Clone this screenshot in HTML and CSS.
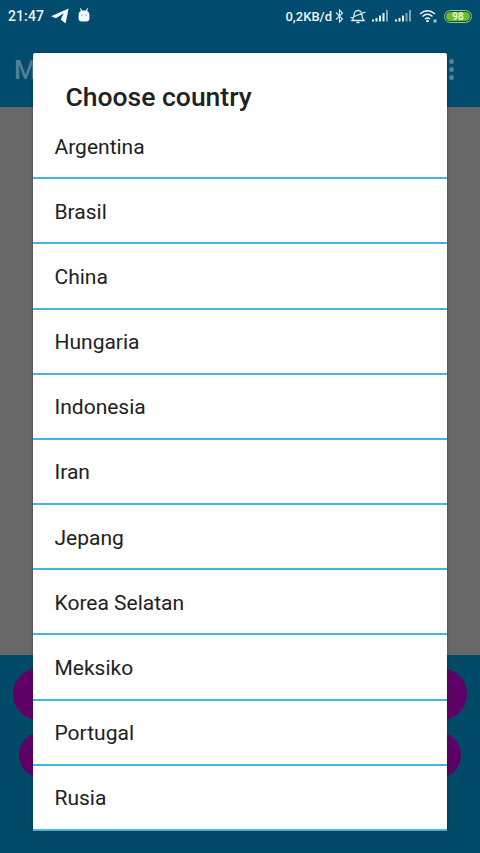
FILE: index.html
```html
<!DOCTYPE html>
<html lang="en">
<head>
<meta charset="utf-8">
<title>Choose country</title>
<link rel="stylesheet" href="styles.css">
</head>
<body>
<div class="app">
  <header class="top">
    <div class="status">
      <div class="status-left">
        <span class="time">21:47</span>
        <svg class="ic-tg" viewBox="0 0 18 16"><path d="M0 8.2 17.6.4 14.6 15.4 9.6 11.6 12.8 5.2 5 10.2Z" fill="#f1f7fa"/></svg>
        <svg class="ic-bot" viewBox="0 0 13 15"><path d="M3 0 4.4 2.6H8.600L10 0 10.800.6 10 3.200Q12.400 4.400 12.400 7.500V11Q12.400 14.500 9 14.500H4Q.6 14.500.6 11V7.500Q.6 4.400 3 3.200L2.200.6Z" fill="#f1f7fa"/><circle cx="4.300" cy="7.500" r=".9" fill="#8fb0c0"/><circle cx="8.700" cy="7.500" r=".9" fill="#8fb0c0"/></svg>
      </div>
      <div class="status-right">
        <span class="speed">0,2KB/d</span>
        <svg class="ic-bt" viewBox="0 0 9 14"><path d="M1 3.500 7.500 10 4.500 13V1L7.500 4 1 10.500" fill="none" stroke="#dfeaf0" stroke-width="1.100"/></svg>
        <svg class="ic-mute" viewBox="0 0 16 15"><path d="M8 1.500C5 1.500 4 4 4 6.500S3.500 10 2 11.500H14C12.500 10 12 9 12 6.500S11 1.500 8 1.500ZM6.500 13.500H9.500M.5 9 15.500 3" fill="none" stroke="#dfeaf0" stroke-width="1.300"/></svg>
        <svg class="ic-sig" viewBox="0 0 17 12"><g fill="#f1f7fa"><rect x="0" y="9.500" width="2" height="2"/><rect x="3.500" y="8" width="2" height="3.500"/><rect x="7" y="5.500" width="2" height="6"/><rect x="10.500" y="3" width="2" height="8.500"/></g><rect x="14" y="0" width="2" height="11.500" fill="#7fa3b7"/></svg>
        <svg class="ic-sig" viewBox="0 0 17 12"><g fill="#f1f7fa"><rect x="0" y="9.500" width="2" height="2"/><rect x="3.500" y="8" width="2" height="3.500"/><rect x="7" y="5.500" width="2" height="6"/></g><g fill="#7fa3b7"><rect x="10.500" y="3" width="2" height="8.500"/><rect x="14" y="0" width="2" height="11.500"/></g></svg>
        <svg class="ic-wifi" viewBox="0 0 18 14"><path d="M1 5Q8.500-1.500 16 5M3.500 7.500Q8.500 3 13.500 7.500M6 10Q8.500 8 11 10" fill="none" stroke="#f1f7fa" stroke-width="1.500"/><circle cx="8.500" cy="12" r="1.300" fill="#f1f7fa"/><rect x="14.500" y="10.500" width="3" height="3" fill="#a9c3d0"/></svg>
        <span class="battery"><span class="battery-level">98</span></span>
      </div>
    </div>
    <div class="appbar">
      <span class="app-title">M</span>
      <span class="menu"><i></i><i></i><i></i></span>
    </div>
  </header>
  <main class="content"></main>
  <footer class="bottom">
    <div class="pair pair-a"><span class="fab"></span><span class="fab"></span></div>
    <div class="pair pair-b"><span class="fab"></span><span class="fab"></span></div>
  </footer>
  <section class="dialog">
    <h1 class="dialog-title">Choose country</h1>
    <ul class="list">
      <li>Argentina</li>
      <li>Brasil</li>
      <li>China</li>
      <li>Hungaria</li>
      <li>Indonesia</li>
      <li>Iran</li>
      <li>Jepang</li>
      <li>Korea Selatan</li>
      <li>Meksiko</li>
      <li>Portugal</li>
      <li>Rusia</li>
    </ul>
  </section>
</div>
</body>
</html>
```
FILE: styles.css
```css
* { box-sizing: border-box; }
html, body { margin: 0; padding: 0; }
body { width: 480px; height: 853px; overflow: hidden; font-family: Roboto, "Liberation Sans", sans-serif; }
.app { position: relative; width: 480px; height: 853px; display: flex; flex-direction: column; background: #004a68; }
.top { height: 107px; background: #004b6e; flex: none; }
.status { height: 32px; display: flex; justify-content: space-between; align-items: center; padding: 0 8px; color: #eef5f8; }
.status-left, .status-right { display: flex; align-items: center; }
.time { font-size: 14px; font-weight: 500; letter-spacing: .1px; }
.ic-tg { width: 18px; height: 16px; margin-left: 7px; }
.ic-bot { width: 12px; height: 14px; margin-left: 9px; margin-top: -3px; }
.speed { font-size: 13px; font-weight: 500; }
.ic-bt { width: 9px; height: 14px; margin-left: 3px; }
.ic-mute { width: 16px; height: 15px; margin-left: 6px; }
.ic-sig { width: 17px; height: 12px; margin-left: 6px; }
.ic-sig + .ic-sig { margin-left: 6px; }
.ic-wifi { width: 18px; height: 14px; margin-left: 7px; }
.battery { width: 28px; height: 13px; margin-left: 7px; border: 1px solid #8fd16a; border-radius: 7px; padding: 1px; display: flex; }
.battery-level { flex: 1; background: #75b82e; border-radius: 5px; color: #e8f5c8; font-size: 10px; font-weight: 700; line-height: 9px; text-align: center; }
.appbar { height: 75px; display: flex; justify-content: space-between; align-items: center; padding: 0 26px 0 14px; }
.app-title { font-size: 26px; font-weight: 500; color: #557f96; }
.menu { display: flex; flex-direction: column; gap: 3px; }
.menu i { width: 5px; height: 5px; border-radius: 50%; background: #557f96; }
.content { flex: 1; background: #686868; }
.bottom { height: 198px; flex: none; background: #004a68; padding-top: 13px; display: flex; flex-direction: column; gap: 12px; }
.pair { display: flex; justify-content: space-between; }
.pair-a { padding: 0 13px; }
.pair-b { padding: 0 19px; }
.fab { display: block; border-radius: 50%; background: #5e0065; }
.pair-a .fab { width: 52px; height: 52px; }
.pair-b .fab { width: 46px; height: 46px; }
.dialog { position: absolute; left: 33px; top: 53px; width: 414px; height: 778px; background: #fff; border-radius: 2px; display: flex; flex-direction: column; box-shadow: 0 0 3px rgba(0,0,0,.35); }
.dialog-title { margin: 0; height: 61px; flex: none; padding: 27px 0 0 32.500px; font-size: 26.500px; line-height: 33px; font-weight: 500; color: #212121; }
.list { list-style: none; margin: 0; padding: 0; flex: 1; display: grid; grid-template-rows: repeat(11, 1fr); }
.list li { display: flex; align-items: center; padding: 2px 0 0 21.500px; font-size: 21px; color: #212121; border-bottom: 2px solid #45b4de; }
```
